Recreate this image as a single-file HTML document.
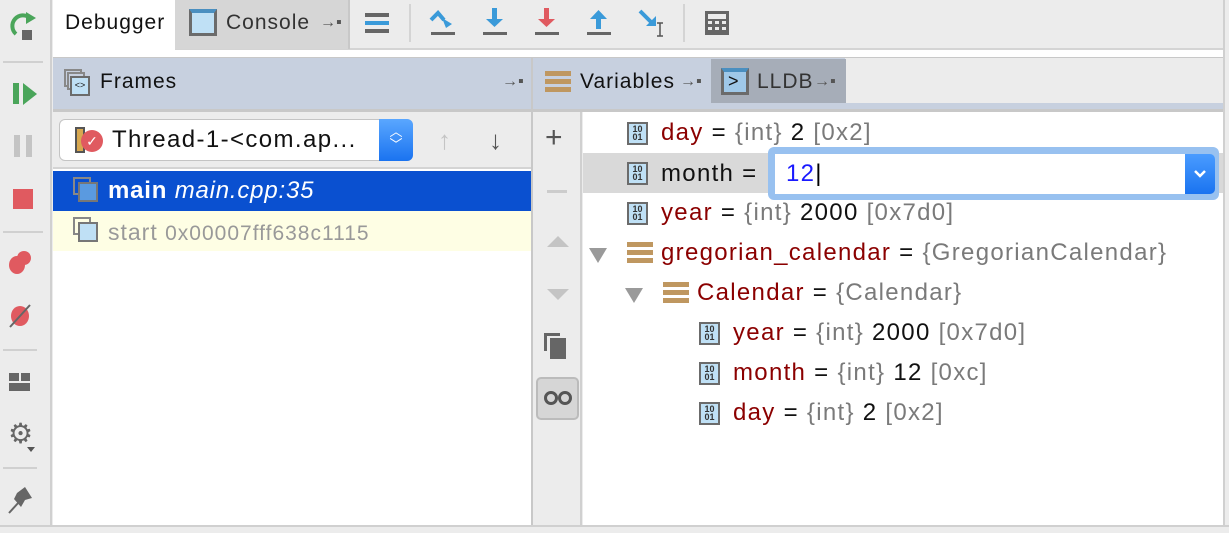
<!DOCTYPE html>
<html><head><meta charset="utf-8"><style>
*{margin:0;padding:0;box-sizing:border-box}
body{width:1229px;height:533px;background:#ececec;font-family:"Liberation Sans",sans-serif;position:relative;overflow:hidden;font-size:24px;letter-spacing:1.3px;color:#111}
.a{position:absolute}
.t{position:absolute;white-space:nowrap;line-height:40px}
.h{font-size:21px;letter-spacing:1px}
.nm{color:#8b0000}.gr{color:#7a7a7a}
.ib{position:absolute;width:21px;height:23px;border:2px solid #6b6b6b;background:#bfe0f5;font-size:9px;letter-spacing:0;line-height:8px;font-weight:bold;color:#333;text-align:center;padding-top:1px}
.st{position:absolute;width:26px;height:22px}
.st i{display:block;height:5px;background:#bf9760;margin-bottom:3px}
.tri{position:absolute;width:0;height:0;border-left:9px solid transparent;border-right:9px solid transparent;border-top:15px solid #9a9a9a}
.pin{font-size:16px;color:#555;letter-spacing:0}
</style></head><body>
<div class="a" style="left:0;top:0;width:52px;height:533px;background:#ececec;border-right:2px solid #d0d0d0"></div>
<svg class="a" style="left:8px;top:10px" width="32" height="32" viewBox="0 0 32 32"><path d="M8 24 A10 10 0 1 1 22 8" fill="none" stroke="#4aa55a" stroke-width="4"/><path d="M18 2 L28 8 L18 14Z" fill="#4aa55a"/><rect x="14" y="20" width="10" height="10" fill="#666"/></svg>
<div class="a" style="left:3px;top:61px;width:40px;height:2px;background:#d0d0d0"></div>
<div class="a" style="left:13px;top:83px;width:6px;height:21px;background:#4aa55a"></div>
<div class="a" style="left:23px;top:83px;width:0;height:0;border-top:11px solid transparent;border-bottom:11px solid transparent;border-left:14px solid #4aa55a"></div>
<div class="a" style="left:14px;top:135px;width:6px;height:22px;background:#c4c4c4"></div>
<div class="a" style="left:26px;top:135px;width:6px;height:22px;background:#c4c4c4"></div>
<div class="a" style="left:13px;top:189px;width:20px;height:20px;background:#e05a60"></div>
<div class="a" style="left:3px;top:231px;width:40px;height:2px;background:#d0d0d0"></div>
<div class="a" style="left:17px;top:251px;width:14px;height:14px;border-radius:50%;background:#e05a60"></div>
<div class="a" style="left:9px;top:256px;width:16px;height:18px;border-radius:50%;background:#e05a60"></div>
<svg class="a" style="left:8px;top:303px" width="24" height="26"><ellipse cx="12" cy="13" rx="9" ry="10" fill="#e05a60"/><line x1="2" y1="24" x2="22" y2="2" stroke="#666" stroke-width="2"/></svg>
<div class="a" style="left:3px;top:349px;width:34px;height:2px;background:#d0d0d0"></div>
<div class="a" style="left:9px;top:373px;width:10px;height:8px;background:#666"></div>
<div class="a" style="left:21px;top:373px;width:9px;height:8px;background:#666"></div>
<div class="a" style="left:9px;top:383px;width:21px;height:8px;background:#666"></div>
<div class="a" style="left:8px;top:419px;font-size:28px;color:#666;line-height:30px;letter-spacing:0">⚙</div>
<div class="a" style="left:27px;top:447px;border-left:4px solid transparent;border-right:4px solid transparent;border-top:5px solid #555"></div>
<div class="a" style="left:3px;top:467px;width:34px;height:2px;background:#d0d0d0"></div>
<svg class="a" style="left:7px;top:485px" width="26" height="30"><path d="M2 28 L12 17" stroke="#666" stroke-width="2"/><path d="M10 8 L18 2 L25 13 L18 15 L14 22 L7 14Z" fill="#666"/></svg>
<div class="a" style="left:53px;top:0;width:1170px;height:50px;background:#ececec;border-bottom:2px solid #d4d4d4"></div>
<div class="a" style="left:53px;top:0;width:122px;height:50px;background:#fff"></div>
<div class="t h" style="left:65px;top:3px;color:#111">Debugger</div>
<div class="a" style="left:175px;top:0;width:175px;height:49px;background:#d6d6d6;border-right:2px solid #c8c8c8"></div>
<div class="a" style="left:189px;top:9px;width:28px;height:27px;border:3px solid #6b6b6b;border-top:4px solid #4a8fc0;background:#bfe0f5"></div>
<div class="t h" style="left:226px;top:3px;color:#333">Console</div>
<div class="t pin" style="left:320px;top:3px">→▪</div>
<div class="a" style="left:365px;top:13px;width:24px;height:4px;background:#666"></div>
<div class="a" style="left:365px;top:21px;width:24px;height:4px;background:#3a9ad9"></div>
<div class="a" style="left:365px;top:29px;width:24px;height:4px;background:#666"></div>
<div class="a" style="left:409px;top:4px;width:2px;height:38px;background:#d4d4d4"></div>
<svg class="a" style="left:428px;top:8px" width="28" height="28"><path d="M3 12 L10 5 L16 12" fill="none" stroke="#3a9ad9" stroke-width="4"/><path d="M14 10 L24 16 L18 20Z" fill="#3a9ad9"/><rect x="3" y="24" width="24" height="3" fill="#666"/></svg>
<svg class="a" style="left:481px;top:8px" width="28" height="28"><rect x="11" y="0" width="5" height="12" fill="#3a9ad9"/><path d="M5 11 L22 11 L13.5 19Z" fill="#3a9ad9"/><rect x="2" y="24" width="24" height="3" fill="#666"/></svg>
<svg class="a" style="left:533px;top:8px" width="28" height="28"><rect x="11" y="0" width="5" height="12" fill="#e05a60"/><path d="M5 11 L22 11 L13.5 19Z" fill="#e05a60"/><rect x="2" y="24" width="24" height="3" fill="#666"/></svg>
<svg class="a" style="left:585px;top:8px" width="28" height="28"><rect x="11" y="9" width="5" height="12" fill="#3a9ad9"/><path d="M5 11 L22 11 L13.5 2Z" fill="#3a9ad9"/><rect x="2" y="24" width="24" height="3" fill="#666"/></svg>
<svg class="a" style="left:637px;top:8px" width="32" height="30"><path d="M3 3 L14 14" stroke="#3a9ad9" stroke-width="4"/><path d="M9 18 L19 18 L19 8Z" fill="#3a9ad9"/><path d="M20 15 h6 M23 15 v13 M20 28 h6" stroke="#555" stroke-width="1.5"/></svg>
<div class="a" style="left:683px;top:4px;width:2px;height:38px;background:#d4d4d4"></div>
<svg class="a" style="left:705px;top:11px" width="24" height="24"><rect x="0" y="0" width="24" height="24" fill="#666"/><rect x="3" y="3" width="18" height="5" fill="#ececec"/><g fill="#ececec"><rect x="3" y="10" width="4" height="3"/><rect x="10" y="10" width="4" height="3"/><rect x="17" y="10" width="4" height="3"/><rect x="3" y="16" width="4" height="3"/><rect x="10" y="16" width="4" height="3"/><rect x="17" y="16" width="4" height="3"/></g></svg>
<div class="a" style="left:53px;top:50px;width:1170px;height:7px;background:#fff"></div>
<div class="a" style="left:53px;top:57px;width:1170px;height:55px;background:#c7d0df;border-top:1px solid #c8c8c8;border-bottom:3px solid #c8c8c8"></div>
<div class="a" style="left:845px;top:58px;width:378px;height:45px;background:#ececec"></div>
<div class="a" style="left:531px;top:57px;width:2px;height:468px;background:#c8c8c8"></div>
<div class="a" style="left:64px;top:69px;width:18px;height:18px;border:2px solid #888"></div>
<div class="a" style="left:67px;top:72px;width:18px;height:18px;border:2px solid #888;background:#c7d0df"></div>
<div class="a" style="left:70px;top:76px;width:20px;height:20px;border:2px solid #6b6b6b;background:#bfe0f5;font-size:9px;letter-spacing:0;text-align:center;line-height:14px">&lt;&gt;</div>
<div class="t h" style="left:100px;top:62px">Frames</div>
<div class="t pin" style="left:502px;top:62px">→▪</div>
<div class="st" style="left:545px;top:71px"><i></i><i></i><i></i></div>
<div class="t h" style="left:580px;top:62px">Variables</div>
<div class="t pin" style="left:680px;top:62px">→▪</div>
<div class="a" style="left:711px;top:59px;width:135px;height:44px;background:#a6adb8"></div>
<div class="a" style="left:721px;top:68px;width:28px;height:27px;border:3px solid #6b6b6b;border-top:4px solid #4a8fc0;background:#9fc8e8;font-size:18px;letter-spacing:0;line-height:18px;padding-left:4px">&gt;</div>
<div class="t h" style="left:757px;top:62px;color:#333">LLDB</div>
<div class="t pin" style="left:814px;top:62px">→▪</div>
<div class="a" style="left:53px;top:112px;width:478px;height:413px;background:#fff"></div>
<div class="a" style="left:53px;top:112px;width:478px;height:57px;background:#ececec;border-bottom:2px solid #d4d4d4"></div>
<div class="a" style="left:59px;top:119px;width:354px;height:42px;background:#fff;border:1px solid #c4c4c4;border-radius:6px"></div>
<div class="a" style="left:379px;top:119px;width:34px;height:42px;background:linear-gradient(#5aa7ff,#1a73f0);border-radius:0 6px 6px 0;color:#fff;font-size:13px;letter-spacing:0;text-align:center;line-height:13px;padding-top:6px">︿<br>﹀</div>
<div class="a" style="left:75px;top:127px;width:10px;height:26px;background:#d8a850;border:2px solid #555"></div>
<div class="a" style="left:81px;top:130px;width:22px;height:22px;border-radius:50%;background:#e05a60;color:#fff;font-size:14px;letter-spacing:0;text-align:center;line-height:22px">✓</div>
<div class="t" style="left:112px;top:120px;font-size:24px;letter-spacing:1.4px">Thread-1-&lt;com.ap...</div>
<div class="t" style="left:438px;top:120px;font-size:26px;color:#c4c4c4">↑</div>
<div class="t" style="left:489px;top:120px;font-size:26px;color:#555">↓</div>
<div class="a" style="left:53px;top:171px;width:478px;height:40px;background:#0a50d0"></div>
<div class="a" style="left:53px;top:211px;width:478px;height:40px;background:#fefee4"></div>
<div class="a" style="left:73px;top:177px;width:18px;height:18px;border:2px solid #888"></div>
<div class="a" style="left:78px;top:182px;width:20px;height:20px;border:2px solid #777;background:#5a9ae0"></div>
<div class="t" style="left:108px;top:171px;color:#fff;font-size:24px;letter-spacing:0.8px"><b>main</b> <i>main.cpp:35</i></div>
<div class="a" style="left:73px;top:217px;width:18px;height:18px;border:2px solid #888"></div>
<div class="a" style="left:78px;top:222px;width:20px;height:20px;border:2px solid #777;background:#bfe0f5"></div>
<div class="t" style="left:108px;top:212px;color:#999;font-size:23px;letter-spacing:1px">start <span style="font-size:21px">0x00007fff638c1115</span></div>
<div class="a" style="left:533px;top:112px;width:49px;height:413px;background:#ececec;border-right:2px solid #d0d0d0"></div>
<div class="t" style="left:545px;top:118px;font-size:30px;color:#555">+</div>
<div class="a" style="left:547px;top:190px;width:20px;height:3px;background:#ccc"></div>
<div class="a" style="left:547px;top:236px;border-left:11px solid transparent;border-right:11px solid transparent;border-bottom:11px solid #c4c4c4"></div>
<div class="a" style="left:547px;top:289px;border-left:11px solid transparent;border-right:11px solid transparent;border-top:11px solid #c4c4c4"></div>
<div class="a" style="left:544px;top:333px;width:16px;height:18px;border:3px solid #666;border-right:none;border-bottom:none"></div>
<div class="a" style="left:550px;top:338px;width:16px;height:21px;background:#666"></div>
<div class="a" style="left:536px;top:377px;width:43px;height:43px;background:#d6d6d6;border:2px solid #bbb;border-radius:5px"></div>
<svg class="a" style="left:543px;top:390px" width="30" height="16"><circle cx="8" cy="8" r="5.5" fill="none" stroke="#555" stroke-width="3"/><circle cx="22" cy="8" r="5.5" fill="none" stroke="#555" stroke-width="3"/></svg>
<div class="a" style="left:583px;top:112px;width:640px;height:413px;background:#fff"></div>
<div class="a" style="left:583px;top:153px;width:640px;height:40px;background:#d9d9d9"></div>
<div class="ib" style="left:627px;top:122px">10<br>01</div><div class="t" style="left:661px;top:113px"><span class="nm">day</span> = <span class="gr">{int}</span> 2 <span class="gr">[0x2]</span></div>
<div class="ib" style="left:627px;top:162px">10<br>01</div><div class="t" style="left:661px;top:154px">month =</div>
<div class="a" style="left:768px;top:147px;width:451px;height:53px;background:#98c1f0;border-radius:6px"></div>
<div class="a" style="left:775px;top:154px;width:410px;height:40px;background:#fff"></div>
<div class="a" style="left:1185px;top:154px;width:30px;height:40px;background:linear-gradient(#4a9cff,#1a73f0);border-radius:0 5px 5px 0"></div>
<svg class="a" style="left:1192px;top:168px" width="16" height="12"><path d="M3 3 L8 8 L13 3" fill="none" stroke="#fff" stroke-width="2.5"/></svg>
<div class="t" style="left:786px;top:154px;color:#1a1aff">12<span style="color:#000">|</span></div>
<div class="ib" style="left:627px;top:202px">10<br>01</div><div class="t" style="left:661px;top:193px"><span class="nm">year</span> = <span class="gr">{int}</span> 2000 <span class="gr">[0x7d0]</span></div>
<div class="tri" style="left:589px;top:248px"></div><div class="st" style="left:627px;top:242px"><i></i><i></i><i></i></div><div class="t" style="left:661px;top:233px"><span class="nm">gregorian_calendar</span> = <span class="gr">{GregorianCalendar}</span></div>
<div class="tri" style="left:625px;top:288px"></div><div class="st" style="left:663px;top:282px"><i></i><i></i><i></i></div><div class="t" style="left:697px;top:273px"><span class="nm">Calendar</span> = <span class="gr">{Calendar}</span></div>
<div class="ib" style="left:699px;top:322px">10<br>01</div><div class="t" style="left:733px;top:313px"><span class="nm">year</span> = <span class="gr">{int}</span> 2000 <span class="gr">[0x7d0]</span></div>
<div class="ib" style="left:699px;top:362px">10<br>01</div><div class="t" style="left:733px;top:353px"><span class="nm">month</span> = <span class="gr">{int}</span> 12 <span class="gr">[0xc]</span></div>
<div class="ib" style="left:699px;top:402px">10<br>01</div><div class="t" style="left:733px;top:393px"><span class="nm">day</span> = <span class="gr">{int}</span> 2 <span class="gr">[0x2]</span></div>
<div class="a" style="left:1223px;top:0;width:6px;height:533px;background:#ececec;border-left:2px solid #d0d0d0"></div>
<div class="a" style="left:0;top:525px;width:1229px;height:8px;background:#ececec;border-top:2px solid #d0d0d0"></div>
</body></html>
